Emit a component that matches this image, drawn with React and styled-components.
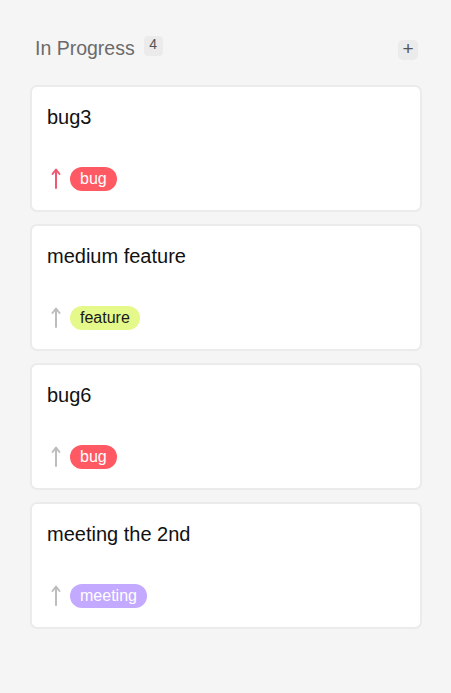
import React from "react";
import styled, { createGlobalStyle } from "styled-components";

const GlobalStyle = createGlobalStyle`
    html, body {
        margin: 0;
        padding: 0;
        background: #f5f5f5;
        font-family: "Liberation Sans", Arial, sans-serif;
    }
`;

const tagColors = {
    bug: { bg: "#ff5a64", fg: "#ffffff" },
    feature: { bg: "#e4f98a", fg: "#1a1a1a" },
    meeting: { bg: "#c3a9ff", fg: "#ffffff" },
};

const cards = [
    { title: "bug3", tag: "bug", high: true },
    { title: "medium feature", tag: "feature" },
    { title: "bug6", tag: "bug" },
    { title: "meeting the 2nd", tag: "meeting" },
];

function ArrowUp({ color }) {
    return (
        <svg width="10" height="22" viewBox="0 0 10 22">
            <path d="M5 21 V3 M1.5 7 L5 2.5 L8.5 7" fill="none" stroke={color} strokeWidth="2" strokeLinecap="round" strokeLinejoin="round"/>
        </svg>
    );
}

export default function App() {
    return (
        <>
            <GlobalStyle />
            <Column>
                <Header>
                    <Title>In Progress</Title>
                    <Count>4</Count>
                    <AddButton>+</AddButton>
                </Header>
                <List>
                    {cards.map((card, index) => (
                        <Card key={index}>
                            <CardTitle>{card.title}</CardTitle>
                            <Meta>
                                <Priority>
                                    <ArrowUp color={card.high ? "#ef5a72" : "#bdbdbd"}/>
                                </Priority>
                                <Tag $bg={tagColors[card.tag].bg} $fg={tagColors[card.tag].fg}>
                                    {card.tag}
                                </Tag>
                            </Meta>
                        </Card>
                    ))}
                </List>
            </Column>
        </>
    );
}

const Column = styled.div`
    padding: 34px 29px 0 30px;
    min-height: 693px;
    box-sizing: border-box;
`;

const Header = styled.div`
    display: flex;
    align-items: center;
    padding: 0 4px 0 5px;
    height: 28px;
    margin-bottom: 23px;
`;

const Title = styled.h2`
    margin: 0;
    font-size: 19.5px;
    font-weight: 400;
    color: #6b6b6b;
`;

const Count = styled.span`
    margin-left: 9px;
    align-self: flex-start;
    margin-top: 2px;
    width: 19px;
    height: 20px;
    box-sizing: border-box;
    text-align: center;
    background: #ebebeb;
    color: #555;
    font-size: 14px;
    border-radius: 4px;
    padding-top: 1px;
    line-height: 14px;
`;

const AddButton = styled.button`
    margin-left: auto;
    width: 20px;
    height: 20px;
    border: none;
    border-radius: 5px;
    background: #ebebeb;
    color: #555;
    font-family: "Liberation Sans", Arial, sans-serif;
    font-size: 19px;
    line-height: 20px;
    padding: 0 0 1px 0;
    display: flex;
    align-items: center;
    justify-content: center;
    margin-top: 3px;
`;

const List = styled.div`
    display: flex;
    flex-direction: column;
    gap: 12px;
`;

const Card = styled.div`
    background: #fff;
    border: 2px solid #ebebeb;
    border-radius: 7px;
    height: 127px;
    box-sizing: border-box;
    padding: 17px 15px 0 15px;
    display: flex;
    flex-direction: column;
`;

const CardTitle = styled.div`
    font-size: 20px;
    color: #111;
    line-height: 26px;
`;

const Meta = styled.div`
    display: flex;
    align-items: center;
    margin-top: 37px;
    gap: 6px;
`;

const Priority = styled.span`
    display: flex;
    width: 17px;
    justify-content: center;
    margin-top: -2px;
`;

const Tag = styled.span`
    background: ${p => p.$bg};
    color: ${p => p.$fg};
    font-size: 16px;
    line-height: 24px;
    height: 24px;
    padding: 0 10px;
    border-radius: 12px;
`;
